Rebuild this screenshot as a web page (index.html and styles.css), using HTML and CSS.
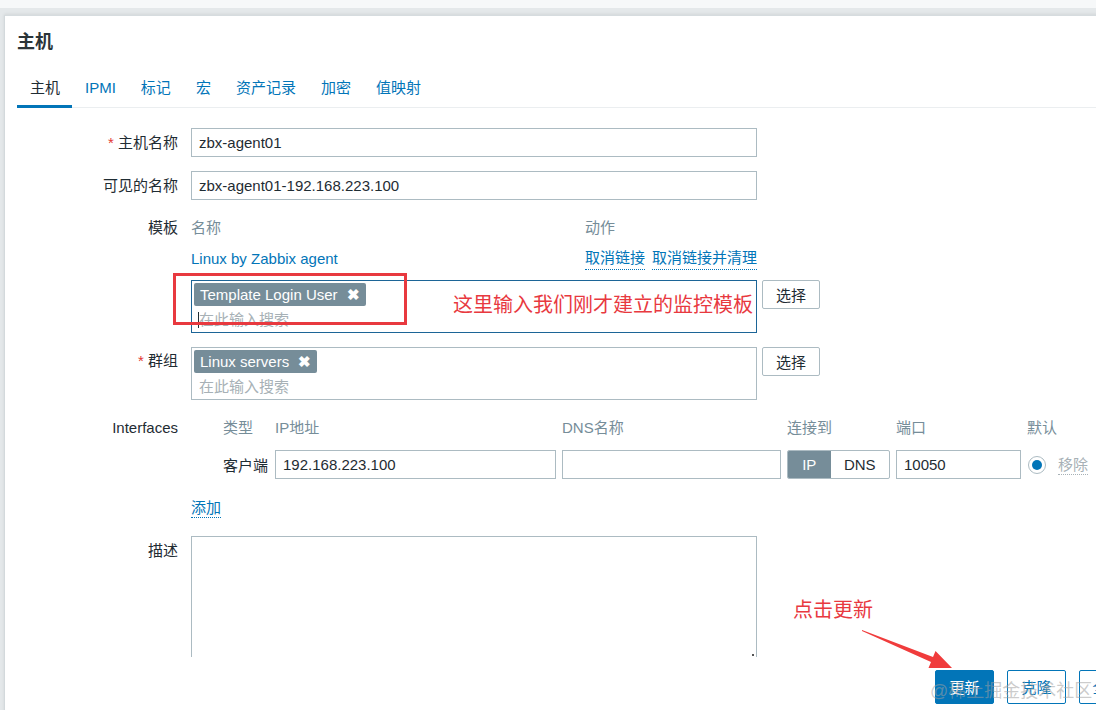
FILE: index.html
```html
<!DOCTYPE html>
<html lang="zh-CN">
<head>
<meta charset="utf-8">
<title>主机</title>
<link rel="stylesheet" href="styles.css">
</head>
<body>
<div class="strip"></div>
<div class="backdrop">
  <div class="modal">
    <div class="modal-head"><h1>主机</h1></div>
    <div class="modal-body">
      <ul class="tabs">
        <li class="active">主机</li>
        <li>IPMI</li>
        <li>标记</li>
        <li>宏</li>
        <li>资产记录</li>
        <li>加密</li>
        <li>值映射</li>
      </ul>
      <div class="form">
        <div class="row r-host">
          <div class="lbl"><span class="req">*</span> 主机名称</div>
          <div class="ctl"><div class="input w566">zbx-agent01</div></div>
        </div>
        <div class="row r-visible">
          <div class="lbl">可见的名称</div>
          <div class="ctl"><div class="input w566">zbx-agent01-192.168.223.100</div></div>
        </div>
        <div class="row r-tpl">
          <div class="lbl lbl-line">模板</div>
          <div class="ctl">
            <div class="tpl-table">
              <div class="th name-col">名称</div>
              <div class="th">动作</div>
              <div class="name-col"><span class="link">Linux by Zabbix agent</span></div>
              <div class="actions"><span class="link dotted">取消链接</span><span class="link dotted">取消链接并清理</span></div>
            </div>
            <div class="ms-wrap">
              <div class="ms focused">
                <div class="tags"><span class="tag">Template Login User<span class="x">✖</span></span></div>
                <div class="ph"><span class="caret"></span>在此输入搜索</div>
              </div>
              <button class="btn-sel">选择</button>
            </div>
          </div>
        </div>
        <div class="row r-group">
          <div class="lbl lbl-ms"><span class="req">*</span> 群组</div>
          <div class="ctl">
            <div class="ms-wrap">
              <div class="ms">
                <div class="tags"><span class="tag">Linux servers<span class="x">✖</span></span></div>
                <div class="ph">在此输入搜索</div>
              </div>
              <button class="btn-sel">选择</button>
            </div>
          </div>
        </div>
        <div class="row r-if">
          <div class="lbl lbl-line">Interfaces</div>
          <div class="ctl">
            <div class="if-grid">
              <div></div>
              <div class="th">类型</div>
              <div class="th">IP地址</div>
              <div class="th">DNS名称</div>
              <div class="th">连接到</div>
              <div class="th">端口</div>
              <div class="th">默认</div>

              <div></div>
              <div class="if-type">客户端</div>
              <div class="input">192.168.223.100</div>
              <div class="input"></div>
              <div class="seg"><span class="on">IP</span><span>DNS</span></div>
              <div class="input">10050</div>
              <div class="defcell"><span class="radio"><span class="dot"></span></span><span class="remove">移除</span></div>
            </div>
            <div class="add"><span class="link dotted">添加</span></div>
          </div>
        </div>
        <div class="row r-desc">
          <div class="lbl lbl-desc">描述</div>
          <div class="ctl"><div class="textarea"><span class="grip"></span></div></div>
        </div>
      </div>
    </div>
    <div class="modal-foot">
      <button class="btn primary">更新</button>
      <button class="btn alt">克隆</button>
      <button class="btn alt">全克隆</button>
    </div>
  </div>
</div>

<div class="anno-box"></div>
<div class="anno-text t1">这里输入我们刚才建立的监控模板</div>
<div class="anno-text t2">点击更新</div>
<svg class="anno-arrow" width="110" height="60" viewBox="0 0 110 60">
  <polygon points="2,4 73,31 75.5,25 92,42 68.5,42 71,36 2,5" fill="#f03c3c"/>
</svg>
<div class="watermark">@稀土掘金技术社区</div>
</body>
</html>
```

FILE: styles.css
```css
html, body {
  margin: 0;
  padding: 0;
  overflow: hidden;
  height: 100%;
}
body {
  font-family: "Liberation Sans", "Noto Sans CJK SC", sans-serif;
  font-size: 15px;
  color: #1f2c33;
  background: #e6eaec;
  position: relative;
}
.strip {
  height: 8px;
  background: #f6f8f9;
}
.backdrop {
  padding: 7px 0 0 4px;
  background: #e4e8ea;
}
.modal {
  width: 1220px;
  background: #fff;
  border-left: 1px solid #d3d9dc;
  border-top: 1px solid #d6dcdf;
  box-shadow: 0 -1px 3px rgba(0,0,0,0.08);
}
.modal-head {
  height: 55px;
  display: flex;
  align-items: center;
  padding-left: 12px;
}
.modal-head h1 {
  margin: 0 0 7px 0;
  font-size: 18px;
  font-weight: bold;
  color: #2b3438;
}
.modal-body {
  height: 586px;
  overflow: hidden;
}
.tabs {
  list-style: none;
  margin: 0 0 0 12px;
  padding: 0;
  display: flex;
  border-bottom: 1px solid #ebeef0;
}
.tabs li {
  padding: 0 12px 0 13px;
  height: 34px;
  line-height: 34px;
  color: #0275b8;
  border-bottom: 3px solid transparent;
  margin-bottom: -1px;
}
.tabs li.active {
  color: #1f2c33;
  border-bottom-color: #0275b8;
}
.form {
  padding-top: 20px;
}
.row {
  display: grid;
  grid-template-columns: 173px 1fr;
  column-gap: 13px;
}
.lbl {
  text-align: right;
  height: 29px;
  line-height: 29px;
  white-space: nowrap;
}
.lbl-line, .lbl-ms {
  height: 22px;
  line-height: 22px;
}
.lbl-ms { margin-top: 3px; }
.lbl-desc { margin-top: 4px; height: 22px; line-height: 22px; }
.req {
  color: #e33734;
}
.r-visible { margin-top: 14px; }
.r-tpl { margin-top: 17px; }
.r-group { margin-top: 14px; }
.r-if { margin-top: 17px; }
.r-desc { margin-top: 17px; }

.input {
  box-sizing: border-box;
  height: 29px;
  line-height: 27px;
  border: 1px solid #acbbc2;
  padding: 0 7px;
  background: #fff;
  white-space: nowrap;
  overflow: hidden;
}
.w566 { width: 566px; }

.tpl-table {
  display: grid;
  grid-template-columns: 394px 172px;
  row-gap: 9px;
}
.th {
  color: #768d99;
  height: 22px;
  line-height: 22px;
  white-space: nowrap;
}
.name-col, .actions {
  height: 22px;
  line-height: 22px;
}
.actions {
  display: flex;
  gap: 7px;
  white-space: nowrap;
}
.link {
  color: #0275b8;
}
.dotted {
  border-bottom: 1px dotted #0275b8;
  line-height: 19px;
  display: inline-block;
}
.ms-wrap {
  display: flex;
  gap: 5px;
  align-items: flex-start;
}
.r-tpl .ms-wrap { margin-top: 10px; }
.ms {
  box-sizing: border-box;
  width: 566px;
  height: 53px;
  border: 1px solid #acbbc2;
  padding: 2px;
}
.ms.focused {
  border-color: #1c6597;
}
.tags {
  height: 23px;
  display: flex;
}
.tag {
  display: inline-flex;
  align-items: center;
  height: 23px;
  background: #768d99;
  color: #fff;
  border-radius: 2px;
  padding: 0 6px;
  white-space: nowrap;
}
.tag .x {
  font-size: 15px;
  font-weight: bold;
  margin-left: 9px;
}
.ph {
  height: 20px;
  line-height: 20px;
  margin-top: 4px;
  padding-left: 5px;
  color: #a7b1b6;
  position: relative;
  white-space: nowrap;
}
.caret {
  position: absolute;
  left: 4px;
  top: 2px;
  width: 1px;
  height: 16px;
  background: #1f2c33;
}
.btn-sel {
  box-sizing: border-box;
  width: 58px;
  height: 29px;
  border: 1px solid #acbbc2;
  border-radius: 2px;
  background: #fff;
  font: inherit;
  color: #1f2c33;
  padding: 0;
}

.if-grid {
  display: grid;
  grid-template-columns: 26px 46px 281px 219px 103px 125px auto;
  column-gap: 6px;
  row-gap: 11px;
  align-items: center;
}
.if-type {
  white-space: nowrap;
}
.seg {
  box-sizing: border-box;
  display: flex;
  height: 29px;
  border: 1px solid #acbbc2;
  border-radius: 2px;
  overflow: hidden;
}
.seg span {
  display: flex;
  align-items: center;
  justify-content: center;
  width: 59px;
}
.seg span.on {
  width: 43px;
  background: #768d99;
  color: #fff;
}
.defcell {
  display: flex;
  align-items: center;
  gap: 12px;
  white-space: nowrap;
}
.radio {
  box-sizing: border-box;
  width: 18px;
  height: 18px;
  border: 1px solid #acbbc2;
  border-radius: 50%;
  display: flex;
  align-items: center;
  justify-content: center;
  margin-left: 1px;
}
.radio .dot {
  width: 10px;
  height: 10px;
  border-radius: 50%;
  background: #0275b8;
}
.remove {
  color: #a7b1b6;
  border-bottom: 1px dotted #a7b1b6;
  line-height: 19px;
}
.add {
  margin-top: 18px;
  height: 22px;
  line-height: 22px;
}
.textarea {
  box-sizing: border-box;
  width: 566px;
  height: 140px;
  border: 1px solid #acbbc2;
  position: relative;
}
.grip {
  position: absolute;
  right: 2px;
  top: 117px;
  width: 2px;
  height: 2px;
  background: #555;
}
.modal-foot {
  display: flex;
  gap: 13px;
  padding: 13px 0 30px 930px;
}
.btn {
  box-sizing: border-box;
  height: 34px;
  width: 59px;
  border-radius: 2px;
  font: inherit;
  padding: 0 0 2px 0;
  flex: none;
  white-space: nowrap;
}
.btn.primary {
  background: #0275b8;
  border: 1px solid #0275b8;
  color: #fff;
}
.btn.alt {
  background: #fff;
  border: 1px solid #0275b8;
  color: #0275b8;
}
.btn.alt:last-child {
  width: 72px;
}

.anno-box {
  position: absolute;
  left: 173px;
  top: 273px;
  width: 228px;
  height: 46px;
  border: 3px solid #e8393f;
}
.anno-text {
  position: absolute;
  color: #e8393f;
  font-size: 20px;
  white-space: nowrap;
  line-height: 26px;
}
.anno-text.t1 { left: 453px; top: 292px; }
.anno-text.t2 { left: 793px; top: 597px; }
.anno-arrow {
  position: absolute;
  left: 860px;
  top: 626px;
}
.watermark {
  position: absolute;
  left: 930px;
  top: 676px;
  font-size: 18px;
  color: rgba(160,160,160,0.55);
  white-space: nowrap;
}
```
